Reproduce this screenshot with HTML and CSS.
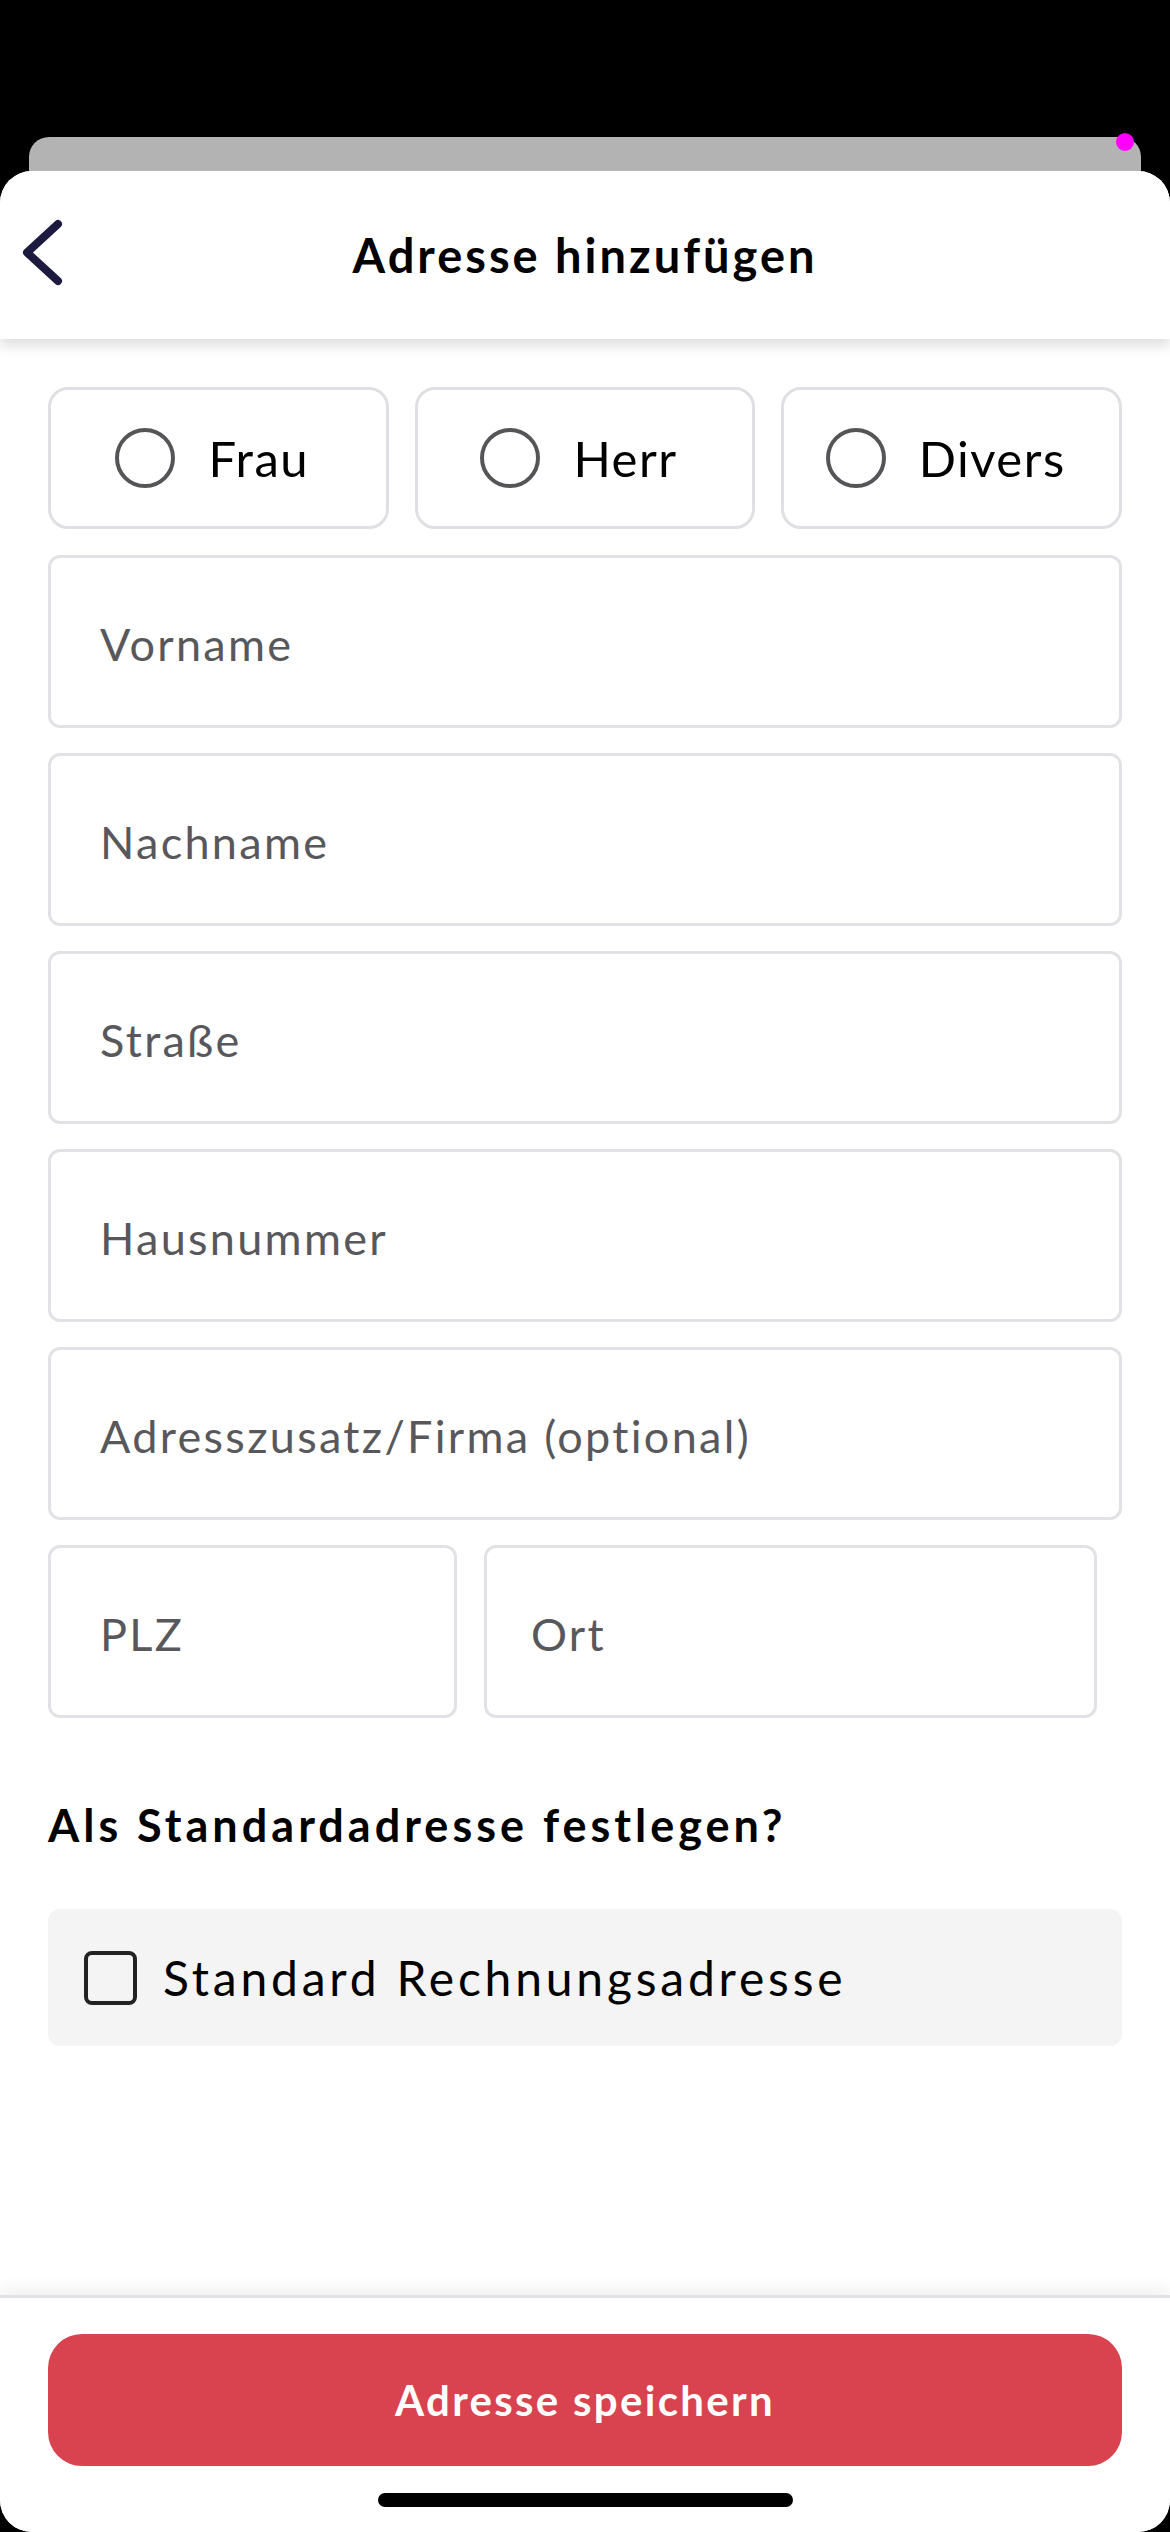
FILE: index.html
```
<!DOCTYPE html>
<html lang="de">
<head>
<meta charset="utf-8">
<title>Adresse hinzufügen</title>
<link rel="stylesheet" href="styles.css">
</head>
<body>
<div class="screen">
  <div class="status"></div>
  <div class="behind">
    <span class="dot"></span>
  </div>
  <div class="sheet">
    <header class="header">
      <button class="back" aria-label="Zurück">
        <svg width="44" height="70" viewBox="0 0 44 70"><polyline points="36,6 5,34.5 36,63" fill="none" stroke="#1c1b3f" stroke-width="8" stroke-linecap="round" stroke-linejoin="round"/></svg>
      </button>
      <h1 class="title">Adresse hinzufügen</h1>
    </header>
    <main class="content">
      <div class="salutation">
        <label class="pill"><span class="radio"></span><span class="pill-label">Frau</span></label>
        <label class="pill"><span class="radio"></span><span class="pill-label">Herr</span></label>
        <label class="pill"><span class="radio"></span><span class="pill-label">Divers</span></label>
      </div>
      <div class="field"><span class="ph">Vorname</span></div>
      <div class="field"><span class="ph">Nachname</span></div>
      <div class="field"><span class="ph">Straße</span></div>
      <div class="field"><span class="ph">Hausnummer</span></div>
      <div class="field"><span class="ph">Adresszusatz/Firma (optional)</span></div>
      <div class="city-row">
        <div class="field zip"><span class="ph">PLZ</span></div>
        <div class="field city"><span class="ph">Ort</span></div>
      </div>
      <h2 class="section">Als Standardadresse festlegen?</h2>
      <div class="option">
        <span class="checkbox"></span>
        <span class="option-label">Standard Rechnungsadresse</span>
      </div>
    </main>
    <footer class="footer">
      <button class="save">Adresse speichern</button>
      <div class="home"></div>
    </footer>
  </div>
</div>
</body>
</html>
```
FILE: styles.css
```
* { box-sizing: border-box; }
html, body { margin: 0; padding: 0; }
body {
  background: #000;
  width: 1170px;
  height: 2532px;
  overflow: hidden;
  font-family: "Lato", "Noto Sans", sans-serif;
  color: #000;
}
.screen {
  width: 1170px;
  height: 2532px;
  display: flex;
  flex-direction: column;
}
.status { height: 137px; flex: none; }
.behind {
  position: relative;
  height: 34px;
  margin: 0 29px;
  background: #b3b3b3;
  border-radius: 20px 20px 0 0;
  flex: none;
}
.dot {
  position: absolute;
  right: 7px;
  top: -4px;
  width: 18px;
  height: 18px;
  border-radius: 50%;
  background: #ff00ff;
}
.sheet {
  flex: 1;
  background: #fff;
  border-radius: 32px;
  display: flex;
  flex-direction: column;
  overflow: hidden;
}
.header {
  position: relative;
  z-index: 2;
  height: 168px;
  flex: none;
  display: flex;
  align-items: center;
  justify-content: center;
  background: #fff;
  box-shadow: 0 7px 12px rgba(0,0,0,0.13);
}
.back {
  position: absolute;
  left: 22px;
  top: 50%;
  transform: translateY(-50%);
  margin-top: -2px;
  background: none;
  border: 0;
  padding: 0;
  display: flex;
}
.title {
  margin: 0;
  font-size: 47px;
  font-weight: 700;
  letter-spacing: 3px;
}
.content {
  flex: 1;
  padding: 48px 48px 0;
  display: flex;
  flex-direction: column;
  gap: 25px;
}
.salutation {
  display: grid;
  grid-template-columns: repeat(3, 1fr);
  gap: 26px;
  margin-bottom: 1px;
}
.pill {
  height: 142px;
  border: 3px solid #e0e0e4;
  border-radius: 20px;
  display: flex;
  align-items: center;
  justify-content: center;
  gap: 33px;
  padding-right: 12px;
}
.radio {
  width: 60px;
  height: 60px;
  border: 4px solid #555558;
  border-radius: 50%;
  flex: none;
}
.pill-label {
  font-size: 49px;
  letter-spacing: 1.5px;
  color: #000;
}
.field {
  height: 173px;
  border: 3px solid #e2e2e6;
  border-radius: 12px;
  display: flex;
  align-items: center;
  padding-left: 49px;
  padding-top: 4px;
}
.ph {
  font-size: 45px;
  color: #58585c;
  letter-spacing: 2.3px;
}
.city-row {
  display: flex;
  gap: 27px;
  width: 1049px;
}
.zip { width: 409px; flex: none; }
.city { flex: 1; padding-left: 44px; }
.section {
  margin: 50px 0 0;
  font-size: 45px;
  font-weight: 700;
  letter-spacing: 4px;
  line-height: 64px;
}
.option {
  margin-top: 27px;
  height: 137px;
  background: #f4f4f4;
  border-radius: 12px;
  display: flex;
  align-items: center;
  padding-left: 36px;
  gap: 26px;
}
.checkbox {
  width: 53px;
  height: 54px;
  border: 4px solid #222;
  border-radius: 8px;
  flex: none;
}
.option-label {
  font-size: 48px;
  letter-spacing: 3.8px;
}
.footer {
  position: relative;
  z-index: 2;
  flex: none;
  height: 237px;
  border-top: 3px solid #e0e0e5;
  box-shadow: 0 -8px 14px rgba(0,0,0,0.05);
  background: #fff;
  display: flex;
  flex-direction: column;
  align-items: center;
  padding-top: 36px;
}
.save {
  width: 1074px;
  height: 132px;
  border: 0;
  border-radius: 34px;
  background: #d9424f;
  color: #fff;
  font-family: "Lato", "Noto Sans", sans-serif;
  font-weight: 700;
  font-size: 42px;
  letter-spacing: 2.3px;
}
.home {
  margin-top: 27px;
  width: 415px;
  height: 14px;
  background: #000;
  border-radius: 7px;
}
```
